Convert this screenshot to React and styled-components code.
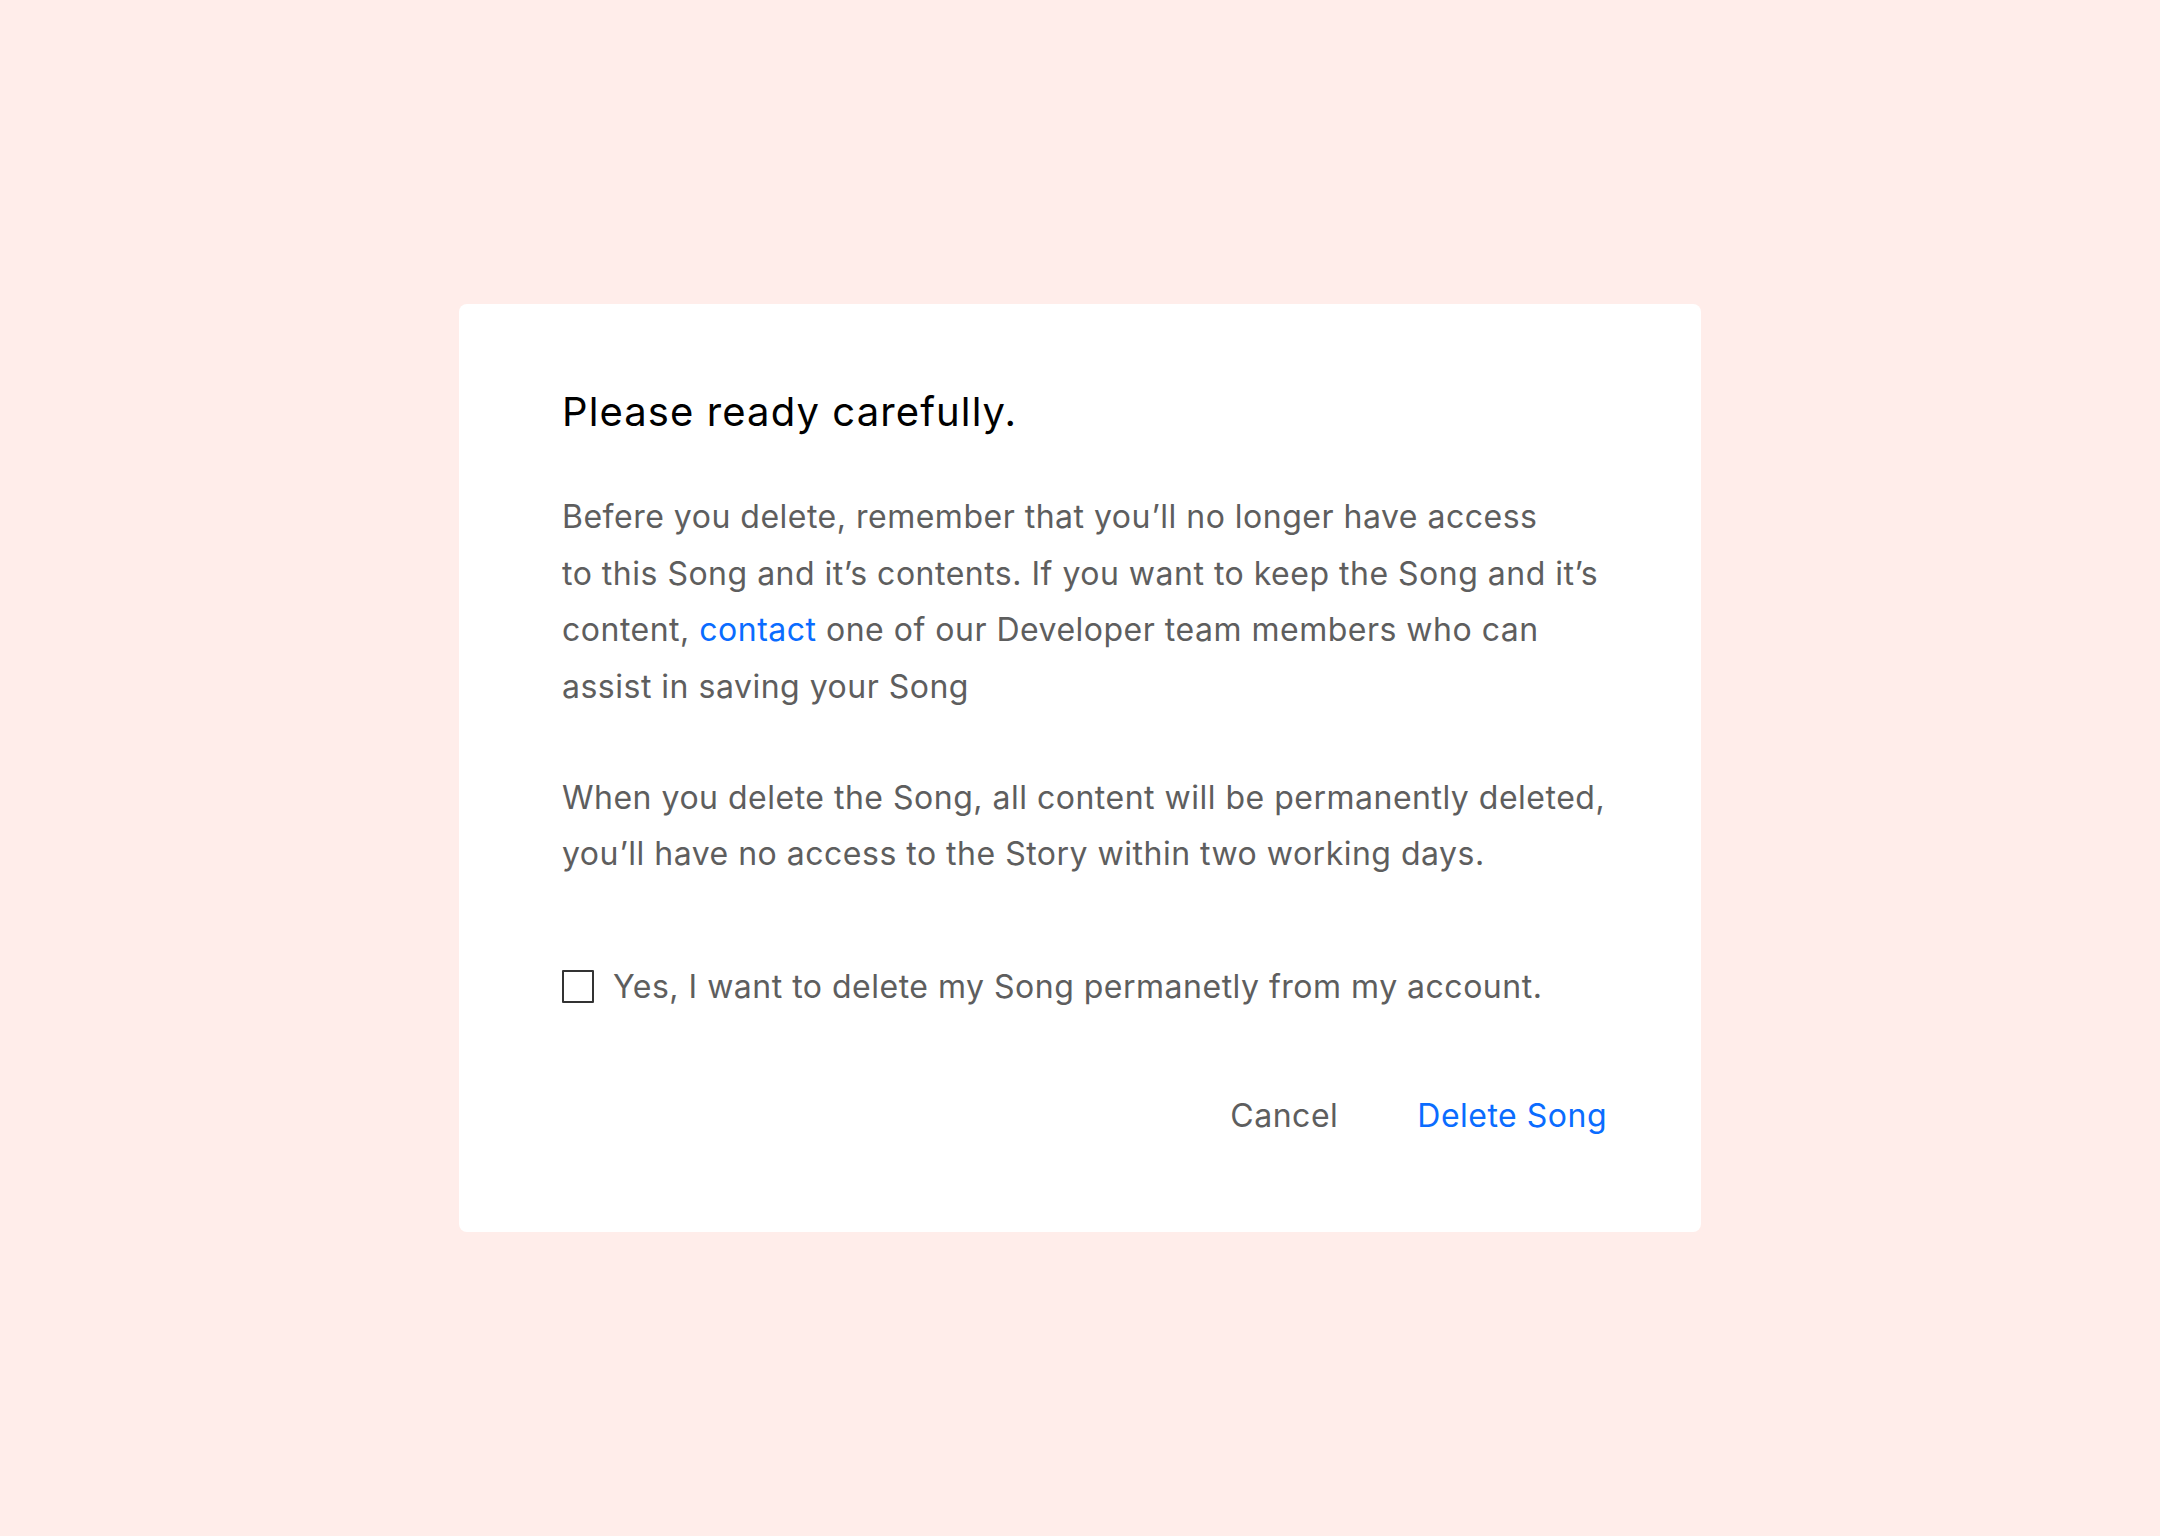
import React from "react";
import styled, { createGlobalStyle } from "styled-components";

const GlobalStyle = createGlobalStyle`
  html, body {
    margin: 0;
    padding: 0;
    background: #ffedea;
  }
  body {
    font-family: "Inter", "Noto Sans", sans-serif;
  }
`;

const Page = styled.div`
  display: flex;
  align-items: center;
  justify-content: center;
  width: 100%;
  min-height: 100vh;
`;

const Card = styled.div`
  box-sizing: border-box;
  width: 1242px;
  height: 928px;
  padding: 84px 94px 0 103px;
  background: #ffffff;
  border-radius: 8px;
  display: flex;
  flex-direction: column;
`;

const Title = styled.h1`
  margin: 0;
  font-size: 40px;
  line-height: 48px;
  font-weight: 400;
  letter-spacing: 1.1px;
  color: #000000;
`;

const Body = styled.p`
  margin: ${(p) => (p.first ? "53px" : "54.5px")} 0 0 0;
  font-size: 32px;
  line-height: 56.5px;
  letter-spacing: 0.5px;
  color: #5e5e5e;
  white-space: nowrap;
`;

const Link = styled.a`
  color: #0a6cff;
  text-decoration: none;
  cursor: pointer;
`;

const CheckRow = styled.label`
  display: flex;
  align-items: center;
  gap: 19px;
  margin-top: 84px;
  font-size: 32px;
  line-height: 40px;
  letter-spacing: 0.5px;
  color: #5e5e5e;
  cursor: pointer;
`;

const Box = styled.input`
  appearance: none;
  box-sizing: border-box;
  width: 32px;
  height: 33px;
  margin: 0;
  border: 2px solid #333333;
  border-radius: 1px;
  background: #ffffff;
  cursor: pointer;
  &:checked {
    background: #0a6cff;
    border-color: #0a6cff;
  }
`;

const Actions = styled.div`
  display: flex;
  justify-content: flex-end;
  gap: 79px;
  margin-top: 89px;
`;

const Action = styled.button`
  padding: 0;
  border: none;
  background: none;
  font-family: inherit;
  font-size: 32px;
  line-height: 40px;
  letter-spacing: 0.5px;
  color: ${(p) => (p.primary ? "#0a6cff" : "#5e5e5e")};
  cursor: pointer;
`;

export default function App() {
  return (
    <Page>
      <GlobalStyle />
      <Card>
        <Title>Please ready carefully.</Title>
        <Body first>
          Befere you delete, remember that you’ll no longer have access
          <br />
          to this Song and it’s contents. If you want to keep the Song and it’s
          <br />
          content, <Link>contact</Link> one of our Developer team members who can
          <br />
          assist in saving your Song
        </Body>
        <Body>
          When you delete the Song, all content will be permanently deleted,
          <br />
          you’ll have no access to the Story within two working days.
        </Body>
        <CheckRow>
          <Box type="checkbox" />
          Yes, I want to delete my Song permanetly from my account.
        </CheckRow>
        <Actions>
          <Action>Cancel</Action>
          <Action primary>Delete Song</Action>
        </Actions>
      </Card>
    </Page>
  );
}
